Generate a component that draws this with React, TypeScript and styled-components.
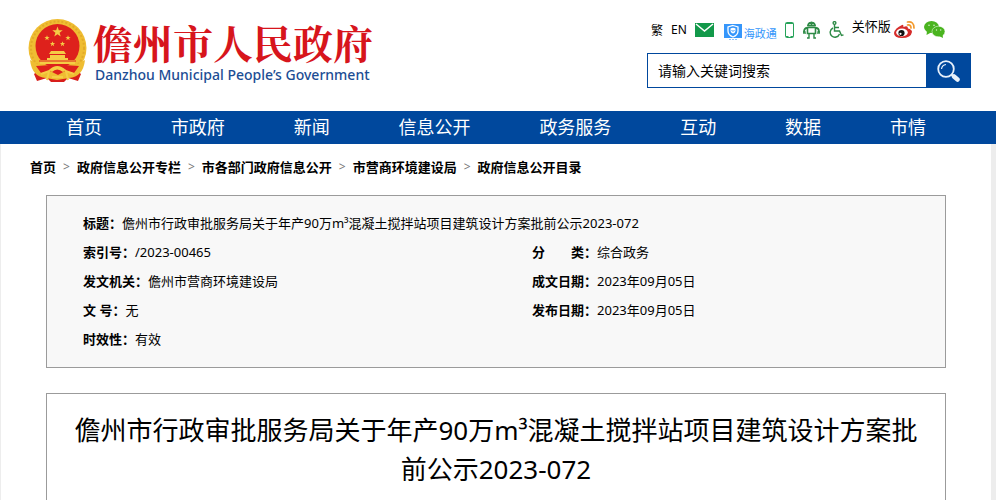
import React from "react";
import styled, { createGlobalStyle } from "styled-components";

const GlobalStyle = createGlobalStyle`
  * { box-sizing: border-box; }
  body {
    margin: 0;
    background: #ededed;
    color: #000;
    font-family: "Noto Sans", "Noto Sans CJK SC", sans-serif;
    font-size: 13px;
  }
  a { color: inherit; text-decoration: none; }
  svg { display: block; flex: none; }
`;

const Page = styled.div`
  min-height: 100vh;
  display: flex;
  flex-direction: column;
`;

const Header = styled.header`
  display: flex;
  justify-content: space-between;
  align-items: flex-start;
  background: #fff;
  height: 111px;
  padding: 18px 25px 0 27px;
`;

const Brand = styled.a`
  display: flex;
  gap: 5px;
`;

const BrandText = styled.div`
  white-space: nowrap;
`;

const BrandName = styled.div`
  color: #d7151c;
  font-family: "Noto Serif CJK SC", "Noto Sans CJK SC", serif;
  font-size: 40px;
  font-weight: 700;
  line-height: 48px;
`;

const BrandSub = styled.div`
  color: #1c4d94;
  font-size: 14px;
  font-weight: 500;
  line-height: 18px;
  padding-left: 2px;
`;

const Tools = styled.div`
  width: 324px;
  flex: none;
`;

const ToolBar = styled.div`
  display: flex;
  align-items: center;
  height: 23px;
  padding-left: 4px;
`;

const ToolLink = styled.a<{ $gap?: number; $size?: number }>`
  display: flex;
  align-items: center;
  white-space: nowrap;
  font-size: ${(p) => p.$size ?? 12}px;
  margin-right: ${(p) => p.$gap ?? 8}px;
`;

const Hzt = styled(ToolLink)`
  color: #3596fb;
  align-items: flex-end;
  gap: 2px;
  line-height: 14px;
  padding-top: 6px;
`;

const CareLink = styled(ToolLink)`
  align-self: flex-start;
  line-height: 16px;
`;

const Search = styled.form`
  display: flex;
  height: 35px;
  margin-top: 12px;
  border: 1px solid #00489d;
`;

const SearchInput = styled.input`
  flex: 1;
  min-width: 0;
  border: 0;
  padding: 0 10px;
  font: inherit;
  font-size: 14px;
  outline: none;
  &::placeholder { color: #000; opacity: 1; }
`;

const SearchButton = styled.button`
  width: 44px;
  border: 0;
  padding: 0;
  background: #00489d;
  display: flex;
  align-items: center;
  justify-content: center;
  cursor: pointer;
`;

const Nav = styled.nav`
  display: flex;
  justify-content: space-between;
  padding: 0 70px 0 66px;
  background: #00489d;
  color: #fff;
  font-size: 18px;
  line-height: 33px;
  white-space: nowrap;
`;

const Main = styled.main`
  flex: 1;
  display: flex;
  flex-direction: column;
  background: #fff;
  margin: 0 5px 0 1px;
`;

const Crumbs = styled.nav`
  display: flex;
  gap: 7px;
  padding: 13px 29px 0;
  line-height: 20px;
  font-weight: 700;
  white-space: nowrap;
`;

const Separator = styled.span`
  color: #777;
  font-weight: 400;
  font-size: 12px;
`;

const InfoBox = styled.dl`
  display: grid;
  grid-template-columns: 1fr 1fr;
  margin: 18px 45px 0;
  padding: 13px 0;
  border: 1px solid #9b9b9b;
  background: #f8f8f8;
  line-height: 29px;
`;

const Field = styled.div<{ $wide?: boolean }>`
  display: flex;
  padding-left: 36px;
  white-space: pre;
  grid-column: ${(p) => (p.$wide ? "1 / -1" : "auto")};
`;

const Label = styled.dt`
  font-weight: 700;
`;

const Value = styled.dd`
  margin: 0;
`;

const Article = styled.article`
  flex: 1;
  margin: 25px 45px 0;
  padding: 17px 24px 10px;
  border: 1px solid #9b9b9b;
  border-bottom: 0;
`;

const Title = styled.h1`
  margin: 0;
  font-size: 26px;
  font-weight: 400;
  line-height: 39px;
  text-align: center;
`;

const STAR = "0,-1 .24,-.32 .95,-.31 .38,.12 .59,.81 0,.4 -.59,.81 -.38,.12 -.95,-.31 -.24,-.32";

const Emblem = () => (
  <svg width="61" height="66" viewBox="0 0 61 66" aria-hidden="true">
    <path d="M14 50 L7 56 10 63 20 60 24 64H37L41 60 51 63 54 56 47 50Z" fill="#d81e1b" />
    <circle cx="30.500" cy="30" r="29" fill="#efbd32" />
    <circle cx="30.500" cy="30" r="26.500" fill="none" stroke="#e3aa28" strokeWidth="2" strokeDasharray="2 2" />
    <path d="M3 42Q5 59 19 60L30 62 42 60Q56 59 58 42L47 48H14Z" fill="#efbd32" />
    <circle cx="30.500" cy="28" r="22" fill="#de211c" />
    <g fill="#f5cd45">
      <polygon points={STAR} transform="translate(30.500 14) scale(5.500)" />
      <polygon points={STAR} transform="translate(20 20) scale(2.800)" />
      <polygon points={STAR} transform="translate(41 20) scale(2.800)" />
      <polygon points={STAR} transform="translate(25.500 26) scale(2.800)" />
      <polygon points={STAR} transform="translate(35.500 26) scale(2.800)" />
      <path d="M22 36 24 33H37L39 36ZM23 37H38V40H41V42H48V46H13V42H20V40H23Z" />
    </g>
    <path d="M12 43H49" stroke="#de211c" />
    <path d="M9 48 24 47 30.500 51 37 47 52 48 47 55 38 53 31 57 23 53 14 55Z" fill="#de211c" />
    <path d="M22 52Q30 44 39 52L36 54Q30 49 25 54Z" fill="#f5cd45" />
    <path d="M14 56 22 53 20 62M47 56 39 53 41 62M25 59H36" stroke="#f5cd45" strokeWidth="2" fill="none" />
  </svg>
);

const MailIcon = () => (
  <svg width="19" height="14" viewBox="0 0 19 14" aria-hidden="true">
    <rect width="19" height="14" fill="#12994a" />
    <path d="M1 1 9.500 8 18 1" stroke="#fff" strokeWidth="1.500" fill="none" />
  </svg>
);

const ShieldIcon = () => (
  <svg width="18" height="17" viewBox="0 0 18 17" aria-hidden="true">
    <rect width="18" height="14" fill="#3596fb" />
    <path d="M9 1.500 14 3V7Q14 11 9 13 4 11 4 7V3Z" fill="none" stroke="#fff" strokeWidth="1.300" />
    <path d="M6.500 4.500Q9 3 11.500 4.500V7Q11 9 9 9.500 7 9 6.500 7Z" fill="#fff" />
    <path d="m7.500 6 1.500 1.500L10.500 6" stroke="#3596fb" fill="none" />
    <path d="M5 15.500H13" stroke="#8cc3fd" strokeDasharray="2 1" />
  </svg>
);

const PhoneIcon = () => (
  <svg width="9" height="16" viewBox="0 0 9 16" aria-hidden="true">
    <rect x=".5" y=".5" width="8" height="15" rx="1" fill="#fff" stroke="#27a35a" />
    <path d="M1 1.500H8M1 14.500H3.500M5.500 14.500H8" stroke="#27a35a" />
  </svg>
);

const RobotIcon = () => (
  <svg width="17" height="18" viewBox="0 0 17 18" fill="none" stroke="#2c8a45" aria-hidden="true">
    <path d="M4.500 5Q4.500 1 8.500 1T12.500 5Z" fill="#2c8a45" />
    <path d="M6.500 3.500H7.500M9.500 3.500H10.500" stroke="#fff" />
    <path d="M4.500 6.500H12.500V12.500H4.500Z" strokeWidth="1.600" />
    <path d="M4 7Q1 7 1 11M13 7Q16 7 16 11" strokeWidth="1.800" />
    <path d="M0 13V11H2V13M15 13V11H17V13M6 13V17H4M11 13V17H13" strokeWidth="1.400" />
  </svg>
);

const WheelchairIcon = () => (
  <svg width="15" height="17" viewBox="0 0 15 17" fill="none" stroke="#2c8a45" strokeWidth="1.400" aria-hidden="true">
    <circle cx="5.500" cy="2" r="1.400" />
    <path d="M5.500 3.500V10H10.500L12.500 14.500 14.500 13.800M5.500 6.500H10" />
    <path d="M4 7A4.800 4.800 0 1 0 10.500 13" />
  </svg>
);

const WeiboIcon = () => (
  <svg width="21" height="18" viewBox="0 0 21 18" aria-hidden="true">
    <path d="M8 4Q9.500 3 9.500 6 14 4 14 7.500 18 8.500 18 11 17 17 8 17 0 17 0 12 1 7 8 4Z" fill="#d52c2b" />
    <ellipse cx="8" cy="11.500" rx="5.800" ry="3.900" fill="#fff" />
    <circle cx="7.500" cy="12" r="3.100" fill="#111" />
    <circle cx="6.500" cy="12.800" r="1.100" fill="#fff" />
    <path d="M13.500 1Q20 0 20 7M13.500 4Q17 3.500 17 7" stroke="#f39a2d" strokeWidth="1.700" fill="none" strokeLinecap="round" />
  </svg>
);

const WechatIcon = () => (
  <svg width="21" height="17" viewBox="0 0 21 17" aria-hidden="true">
    <ellipse cx="7.500" cy="6" rx="7.500" ry="6" fill="#4ab41f" />
    <path d="M3 10 2.500 14 7 11.500Z" fill="#4ab41f" />
    <ellipse cx="14.500" cy="10.500" rx="6.500" ry="5.300" fill="#4ab41f" stroke="#fff" strokeWidth=".5" />
    <path d="M15 15 19 17 18.500 13Z" fill="#4ab41f" />
    <g fill="#d9f2cd">
      <circle cx="5" cy="4.300" r=".8" />
      <circle cx="10" cy="4.300" r=".8" />
      <circle cx="12.500" cy="9" r=".7" />
      <circle cx="16.700" cy="9" r=".7" />
    </g>
  </svg>
);

const SearchIcon = () => (
  <svg width="23" height="22" viewBox="0 0 23 22" fill="none" stroke="#e8f1fb" aria-hidden="true">
    <circle cx="9" cy="9" r="7.800" strokeWidth="1.800" />
    <path d="M4.500 9Q5 5 9 4.500" strokeWidth="1.200" />
    <path d="m14.500 14.500 2 2" strokeWidth="2" />
    <path d="m17 16.500 3.500 3" strokeWidth="4.500" strokeLinecap="round" />
  </svg>
);

const navItems = ["首页", "市政府", "新闻", "信息公开", "政务服务", "互动", "数据", "市情"];
const crumbs = ["首页", "政府信息公开专栏", "市各部门政府信息公开", "市营商环境建设局", "政府信息公开目录"];
const title = "儋州市行政审批服务局关于年产90万m³混凝土搅拌站项目建筑设计方案批前公示2023-072";

const fields = [
  { label: "标题：", value: title, wide: true },
  { label: "索引号：", value: "/2023-00465" },
  { label: "分　　类：", value: "综合政务" },
  { label: "发文机关：", value: "儋州市营商环境建设局" },
  { label: "成文日期：", value: "2023年09月05日" },
  { label: "文 号：", value: "无" },
  { label: "发布日期：", value: "2023年09月05日" },
  { label: "时效性：", value: "有效", wide: true },
];

export default function App() {
  return (
    <Page lang="zh-CN">
      <GlobalStyle />
      <Header>
        <Brand href="#">
          <Emblem />
          <BrandText>
            <BrandName>儋州市人民政府</BrandName>
            <BrandSub>Danzhou Municipal People’s Government</BrandSub>
          </BrandText>
        </Brand>
        <Tools>
          <ToolBar>
            <ToolLink href="#">繁</ToolLink>
            <ToolLink href="#">EN</ToolLink>
            <ToolLink href="#" $gap={10} aria-label="邮箱"><MailIcon /></ToolLink>
            <Hzt href="#" $size={11} $gap={8}><ShieldIcon />海政通</Hzt>
            <ToolLink href="#" $gap={9} aria-label="手机版"><PhoneIcon /></ToolLink>
            <ToolLink href="#" $gap={9} aria-label="智能问答"><RobotIcon /></ToolLink>
            <ToolLink href="#" aria-label="无障碍"><WheelchairIcon /></ToolLink>
            <CareLink href="#" $size={13} $gap={3}>关怀版</CareLink>
            <ToolLink href="#" $gap={9} aria-label="微博"><WeiboIcon /></ToolLink>
            <ToolLink href="#" $gap={0} aria-label="微信"><WechatIcon /></ToolLink>
          </ToolBar>
          <Search onSubmit={(e) => e.preventDefault()}>
            <SearchInput type="text" placeholder="请输入关键词搜索" aria-label="请输入关键词搜索" />
            <SearchButton type="submit" aria-label="搜索"><SearchIcon /></SearchButton>
          </Search>
        </Tools>
      </Header>
      <Nav>
        {navItems.map((item) => <a href="#" key={item}>{item}</a>)}
      </Nav>
      <Main>
        <Crumbs>
          {crumbs.map((item, i) => (
            <React.Fragment key={item}>
              {i > 0 && <Separator>&gt;</Separator>}
              <a href="#">{item}</a>
            </React.Fragment>
          ))}
        </Crumbs>
        <InfoBox>
          {fields.map((f) => (
            <Field key={f.label} $wide={f.wide}>
              <Label>{f.label}</Label>
              <Value>{f.value}</Value>
            </Field>
          ))}
        </InfoBox>
        <Article>
          <Title>{title}</Title>
        </Article>
      </Main>
    </Page>
  );
}
